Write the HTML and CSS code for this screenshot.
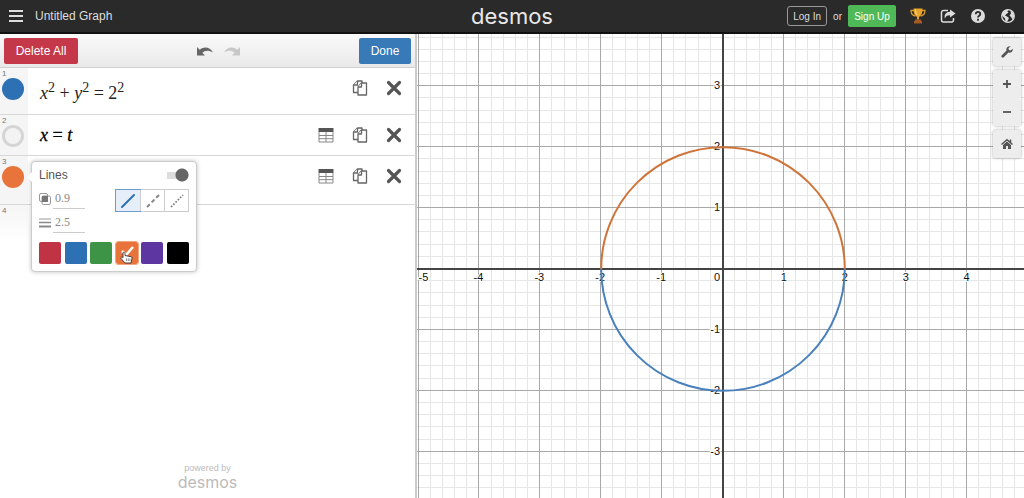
FILE: index.html
```html
<!DOCTYPE html>
<html lang="en">
<head>
<meta charset="utf-8">
<title>Untitled Graph</title>
<link rel="stylesheet" href="styles.css">
</head>
<body>
<svg class="defs" aria-hidden="true">
  <symbol id="i-copy" viewBox="0 0 16 16"><g fill="#fff" stroke="#666" stroke-width="1.300" stroke-linejoin="round"><path d="M5.500 1h4.500v11.500H1.500V5z"/><path d="M1.500 5h4V1"/><path d="M9.500 3h5v12H6V7z"/><path d="M6 7h3.500V3"/></g></symbol>
  <symbol id="i-x" viewBox="0 0 16 16"><path d="M2.500 2.500l11 11M13.500 2.500l-11 11" stroke="#555" stroke-width="3.200" stroke-linecap="round"/></symbol>
  <symbol id="i-table" viewBox="0 0 16 16"><path d="M.5 1h15v4H.5z" fill="#555"/><path d="M1 5v10h14V5M1 8.500h14M1 11.700h14M8 5v10" fill="none" stroke="#888"/></symbol>
  <symbol id="i-undo" viewBox="0 0 16 10"><path d="M0 1v8.500h8L5.300 6.800C8 4 12 4 16 6.500 13 .8 7 0 2.700 3.800z"/></symbol>
</svg>

<header class="header">
  <div class="header-left">
    <button class="icon-btn" aria-label="Menu"><svg width="14" height="12" viewBox="0 0 14 12"><path d="M0 1h14M0 6h14M0 11h14" stroke="#ddd" stroke-width="2"/></svg></button>
    <span class="title">Untitled Graph</span>
  </div>
  <a class="logo" href="#">desmos</a>
  <div class="header-right">
    <button class="login">Log In</button>
    <span class="or">or</span>
    <button class="signup">Sign Up</button>
    <nav class="header-icons">
      <button class="icon-btn" aria-label="Challenges"><svg width="16" height="16" viewBox="0 0 16 16"><path d="M4 2.500H1c0 3 1.500 5 4.500 5.500M12 2.500h3c0 3-1.500 5-4.500 5.500" fill="none" stroke="#d99a2b" stroke-width="1.300"/><path d="M3.500.5h9c0 4-.8 7-3.500 8.500v2.500H7V9C4.300 7.500 3.500 4.500 3.500.5z" fill="#e9a52c"/><path d="M5.500 1.500c0 3 .5 4.500 1.500 5.500" stroke="#ffe08a" fill="none"/><path d="M5 11.500h6V13h1v2.500H4V13h1z" fill="#a45a25"/></svg></button>
      <button class="icon-btn" aria-label="Share"><svg width="16" height="16" viewBox="0 0 16 16"><path d="M8 2.500H3.500a2 2 0 0 0-2 2v7.500a2 2 0 0 0 2 2h8a2 2 0 0 0 2-2V10" fill="none" stroke="#ddd" stroke-width="1.500"/><path d="M10 1.500l5.500 4-5.500 4V7.300C7 7.200 5.600 8.300 5 10.800 3.800 6.500 6 4 10 3.800z" fill="#ddd"/></svg></button>
      <button class="icon-btn" aria-label="Help"><svg width="16" height="16" viewBox="0 0 16 16"><circle cx="8" cy="8" r="7" fill="#ddd"/><path d="M5.700 6.300c0-3.300 4.800-3 4.600-.2C10.200 7.800 8 7.800 8 9.500M8 10.800v1.900" fill="none" stroke="#2a2a2a" stroke-width="1.800"/></svg></button>
      <button class="icon-btn" aria-label="Language"><svg width="16" height="16" viewBox="0 0 16 16"><circle cx="8" cy="8" r="6.300" fill="none" stroke="#ddd" stroke-width="1.300"/><path d="M2 5l3-3 3.500-.3L7.300 3.500l1.200 1L6.500 6 5 7.500l2.500 1.200L9 10l-2 4-1.500-.5L5 10.500 2 7.500zM10.500 2.500l3 2.500.7 3.500-1.700 3-1.500-2.500-1.500-1.500L11 5.500z" fill="#ddd"/></svg></button>
    </nav>
  </div>
</header>

<main class="main">
  <section class="panel" aria-label="Expressions">
    <div class="toolbar">
      <button class="btn btn-red">Delete All</button>
      <div class="history">
        <button class="icon-btn" aria-label="Undo"><svg width="16" height="10" fill="#666"><use href="#i-undo"/></svg></button>
        <button class="icon-btn flip" aria-label="Redo"><svg width="16" height="10" fill="#c8c8c8"><use href="#i-undo"/></svg></button>
      </div>
      <button class="btn btn-blue">Done</button>
    </div>

    <ol class="list">
      <li class="row row-tall">
        <div class="gutter"><span class="num">1</span><button class="dot dot-blue" aria-label="Style of expression 1"></button></div>
        <div class="math"><span><i>x</i><sup>2</sup> + <i>y</i><sup>2</sup> = 2<sup>2</sup></span></div>
        <div class="actions">
          <button class="icon-btn" aria-label="Duplicate"><svg width="16" height="16"><use href="#i-copy"/></svg></button>
          <button class="icon-btn" aria-label="Delete"><svg width="16" height="16"><use href="#i-x"/></svg></button>
        </div>
      </li>
      <li class="row">
        <div class="gutter"><span class="num">2</span><button class="dot dot-empty" aria-label="Style of expression 2"></button></div>
        <div class="math math-dark"><span><i>x</i> = <i>t</i></span></div>
        <div class="actions">
          <button class="icon-btn" aria-label="Convert to table"><svg width="16" height="16"><use href="#i-table"/></svg></button>
          <button class="icon-btn" aria-label="Duplicate"><svg width="16" height="16"><use href="#i-copy"/></svg></button>
          <button class="icon-btn" aria-label="Delete"><svg width="16" height="16"><use href="#i-x"/></svg></button>
        </div>
      </li>
      <li class="row row-open">
        <div class="gutter"><span class="num">3</span><button class="dot dot-orange" aria-label="Style of expression 3"></button></div>
        <div class="math"></div>
        <div class="actions">
          <button class="icon-btn" aria-label="Convert to table"><svg width="16" height="16"><use href="#i-table"/></svg></button>
          <button class="icon-btn" aria-label="Duplicate"><svg width="16" height="16"><use href="#i-copy"/></svg></button>
          <button class="icon-btn" aria-label="Delete"><svg width="16" height="16"><use href="#i-x"/></svg></button>
        </div>
        <div class="popup">
          <div class="popup-head"><label for="lines">Lines</label><input class="toggle" type="checkbox" id="lines" checked></div>
          <div class="popup-mid">
            <div class="fields">
              <label class="field"><svg width="12" height="12" viewBox="0 0 12 12" aria-label="Opacity"><rect x=".5" y=".5" width="8" height="8" rx="1.500" fill="none" stroke="#999"/><rect x="3" y="3" width="8.500" height="8.500" rx="1.500" fill="none" stroke="#999"/><path d="M3 3h6v6H3z" fill="#777"/></svg><input type="text" value="0.9"></label>
              <label class="field"><svg width="12" height="10" viewBox="0 0 12 10" aria-label="Thickness"><path d="M0 1h12" stroke="#999"/><path d="M0 4.500h12" stroke="#888" stroke-width="1.500"/><path d="M0 8.500h12" stroke="#888" stroke-width="2"/></svg><input type="text" value="2.5"></label>
            </div>
            <div class="styles">
              <button class="style-on" aria-label="Solid"><svg width="16" height="16" viewBox="0 0 16 16"><path d="M2 14L14 2" stroke="#2d70b3" stroke-width="2" stroke-linecap="round"/></svg></button>
              <button aria-label="Dashed"><svg width="16" height="16" viewBox="0 0 16 16"><path d="M2 14L14 2" stroke="#888" stroke-width="2" stroke-dasharray="4 2.500"/></svg></button>
              <button aria-label="Dotted"><svg width="16" height="16" viewBox="0 0 16 16"><path d="M2 14L14 2" stroke="#777" stroke-width="1.700" stroke-dasharray="1.700 1.500"/></svg></button>
            </div>
          </div>
          <div class="colors">
            <button class="c-red" aria-label="Red"></button>
            <button class="c-blue" aria-label="Blue"></button>
            <button class="c-green" aria-label="Green"></button>
            <button class="c-orange" aria-label="Orange"><svg width="18" height="20" viewBox="0 0 18 20"><path d="M4 7l4 4 7-8" fill="none" stroke="#fff" stroke-width="2.500"/><path d="M5 8.500c1-.8 2 0 2 1v2l6 1.200c1 .3 1.200 1 1 2L13 19H7l-4-4.500c-.7-1.200.8-2 2-.8z" fill="#fff" stroke="#333" stroke-width=".9"/><path d="M8.500 14.500v2.500M10.300 14.500v2.500M12 14.500v2.500" stroke="#555" stroke-width=".7"/></svg></button>
            <button class="c-purple" aria-label="Purple"></button>
            <button class="c-black" aria-label="Black"></button>
          </div>
        </div>
      </li>
      <li class="row row-last"><div class="gutter"><span class="num">4</span></div></li>
    </ol>
    <footer class="powered"><span>powered by</span><strong>desmos</strong></footer>
  </section>

  <section class="graph" aria-label="Graph">
    <svg class="plot" viewBox="-306 -235 607 464" preserveAspectRatio="xMidYMid slice">
      <g id="grid"></g>
      <g id="labels"></g>
      <path d="M-121.800 0A121.800 121.800 0 0 0 121.800 0" class="curve curve-blue"/>
      <path d="M-121.800 0A121.800 121.800 0 0 1 121.800 0" class="curve curve-orange"/>
    </svg>
    <div class="tools">
      <button class="tool" aria-label="Graph settings"><svg width="12" height="12" viewBox="0 0 12 12"><path d="M1.800 10.200L7 5" stroke="#555" stroke-width="2.800" stroke-linecap="round"/><path d="M11.800 2.800L9.500 4.500 7.800 4l-.3-1.700L9.600.3C7 0 5 1.700 5.300 4L8 6.800c2.200.2 4-1.500 3.800-4z" fill="#555"/></svg></button>
      <div class="zoom">
        <button class="tool" aria-label="Zoom in"><svg width="10" height="10" viewBox="0 0 10 10"><path d="M5 1v8M1 5h8" stroke="#555" stroke-width="1.800"/></svg></button>
        <button class="tool" aria-label="Zoom out"><svg width="10" height="10" viewBox="0 0 10 10"><path d="M1 5h8" stroke="#555" stroke-width="1.800"/></svg></button>
      </div>
      <button class="tool" aria-label="Default view"><svg width="12" height="12" viewBox="0 0 12 12"><path d="M.5 6.500L6 1.800l5.500 4.700M9.500 1.500v3" fill="none" stroke="#555" stroke-width="1.500"/><path d="M2 7l4-3.500L10 7v4H7V8H5v3H2z" fill="#555"/></svg></button>
    </div>
  </section>
</main>
<script src="graph.js"></script>
</body>
</html>
```
FILE: styles.css
```css
* { box-sizing: border-box; }
body { margin: 0; height: 100vh; display: flex; flex-direction: column; font-family: "Liberation Sans", Arial, sans-serif; font-size: 12px; color: #555; background: #fff; overflow: hidden; }
button { font: inherit; border: 0; padding: 0; background: none; cursor: pointer; }
svg { display: block; flex: none; }
.defs { position: absolute; width: 0; height: 0; }
.icon-btn { display: flex; align-items: center; justify-content: center; }

.header { flex: none; height: 34px; display: grid; grid-template-columns: 1fr auto 1fr; align-items: center; background: #2a2a2a; border-bottom: 2px solid #111; color: #ddd; }
.header-left { display: flex; align-items: center; gap: 12px; padding-left: 9px; }
.title { font-size: 12px; }
.logo { color: #e8e8e8; text-decoration: none; font-family: Inter, sans-serif; font-size: 22px; line-height: 30px; }
.header-right { display: flex; align-items: center; justify-content: flex-end; font-size: 10px; padding-right: 8px; }
.login { height: 20px; width: 40px; border: 1px solid #999; border-radius: 3px; color: #ddd; white-space: nowrap; }
.or { padding: 0 6px; }
.signup { height: 22px; width: 48px; border-radius: 2px; background: #4fb857; color: #fff; }
.header-icons { display: flex; gap: 14px; padding-left: 14px; }

.main { flex: 1; min-height: 0; display: flex; }
.panel { flex: none; width: 417px; display: flex; flex-direction: column; border-right: 2px solid #ccc; }
.toolbar { flex: none; height: 34px; display: flex; align-items: center; justify-content: space-between; padding: 0 4px; background: linear-gradient(#fafafa, #e9e9e9); border-bottom: 1px solid #d0d0d0; }
.btn { height: 26px; border-radius: 2px; color: #fff; font-size: 12px; }
.btn-red { width: 74px; background: #c4384a; }
.btn-blue { width: 52px; background: #3879b8; }
.history { display: flex; gap: 11px; }
.flip { transform: scaleX(-1); }

.list { list-style: none; margin: 0; padding: 0; flex: 1; }
.row { position: relative; display: flex; height: 41px; border-bottom: 1px solid #d8d8d8; }
.row-tall { height: 47px; }
.row-open { height: 49px; }
.row-last { height: 36px; border: 0; }
.gutter { width: 28px; background: #f5f5f5; padding: 1px 2px; display: flex; flex-direction: column; }
.row-last .gutter { background: linear-gradient(#f5f5f5, #fff); }
.num { font-size: 8px; line-height: 9px; color: #777; }
.dot { width: 22px; height: 22px; border-radius: 50%; }
.dot-blue { background: #2d70b3; }
.dot-orange { background: #e8743b; }
.dot-empty { background: #f3f3f3; border: 3px solid #d5d5d5; }
.math { flex: 1; display: flex; align-items: center; padding: 3px 0 0 12px; font-family: "Liberation Serif", serif; font-size: 18px; line-height: 24px; color: #222; }
.math-dark { color: #000; padding-top: 0; -webkit-text-stroke: 0.3px #000; }
.math span { white-space: nowrap; }
.math sup { font-size: 14px; line-height: 0; vertical-align: 7px; }
.actions { display: flex; height: 40px; padding-right: 4px; }
.actions .icon-btn { width: 34px; }

.popup { position: absolute; left: 31px; top: 5px; z-index: 2; width: 166px; padding: 6px 7px 7px; background: #fff; border: 1px solid #ccc; border-radius: 4px; box-shadow: 0 0 4px rgba(0, 0, 0, .25); }
.popup::before { content: ""; position: absolute; left: -5px; top: 10px; border: 5px solid transparent; border-left: 0; border-right-color: #fff; }
.popup-head { display: flex; justify-content: space-between; align-items: center; height: 14px; font-size: 12px; }
.toggle { appearance: none; margin: 0; width: 22px; height: 14px; background: radial-gradient(circle at 15px 7px, #666 6px, transparent 7px), linear-gradient(#ddd, #ddd) 0 4px / 20px 7px no-repeat; border-radius: 3px; }
.popup-mid { display: flex; justify-content: space-between; align-items: flex-start; padding-top: 7px; }
.fields { display: grid; gap: 4px; }
.field { display: flex; align-items: center; gap: 2px; height: 20px; }
.field input { width: 32px; height: 19px; padding: 0 2px; border: 0; border-bottom: 1px solid #ccc; background: none; font: 12px/16px "Liberation Serif", serif; color: #888; }
.styles { display: flex; border: 1px solid #ccc; }
.styles button { width: 24px; height: 21px; display: flex; align-items: center; justify-content: center; border-left: 1px solid #ccc; }
.styles .style-on { border: 0; outline: 1px solid #6d9bca; background: #e6eff9; }
.colors { display: flex; justify-content: space-between; padding-top: 9px; }
.colors button { width: 22px; height: 22px; border-radius: 2px; display: flex; align-items: flex-end; justify-content: center; }
.c-red { background: #bf3344; }
.c-blue { background: #2d70b3; }
.c-green { background: #3d9447; }
.colors .c-orange { background: #e8743b; outline: 1px solid #f2a57e; }
.c-purple { background: #5d36a1; }
.c-black { background: #000; }

.powered { display: flex; flex-direction: column; align-items: center; padding-bottom: 8px; color: #bbb; font-size: 9px; line-height: 10px; }
.powered strong { font: 16px/20px Inter, sans-serif; height: 18px; margin-top: -1px; }

.graph { flex: 1; position: relative; min-width: 0; }
.plot { width: 100%; height: 100%; }
.minor { stroke: #e6e6e6; }
.major { stroke: #a8a8a8; }
.axis { stroke: #444; stroke-width: 2; }
.label { font-size: 11px; fill: #111; stroke: #fff; stroke-width: 2; paint-order: stroke; }
.curve { fill: none; stroke-width: 2; }
.curve-blue { stroke: #4a80bb; }
.curve-orange { stroke: #cf7439; }
.tools { position: absolute; top: 4px; right: 3px; width: 28px; display: grid; gap: 4px; }
.tool { width: 28px; height: 28px; display: flex; align-items: center; justify-content: center; background: #ededed; border-radius: 3px; box-shadow: 0 0 3px rgba(0, 0, 0, .35); }
.zoom { border-radius: 3px; box-shadow: 0 0 3px rgba(0, 0, 0, .35); }
.zoom .tool { box-shadow: none; }
```
FILE: graph.js
```js
const NS = "http://www.w3.org/2000/svg";
const UNIT = 60.9;
const grid = document.getElementById("grid");
const labels = document.getElementById("labels");

function line(x1, y1, x2, y2, cls) {
  const el = document.createElementNS(NS, "line");
  el.setAttribute("x1", x1);
  el.setAttribute("y1", y1);
  el.setAttribute("x2", x2);
  el.setAttribute("y2", y2);
  el.setAttribute("class", cls);
  grid.append(el);
}

function label(x, y, anchor, text) {
  const el = document.createElementNS(NS, "text");
  el.setAttribute("x", x);
  el.setAttribute("y", y);
  el.setAttribute("text-anchor", anchor);
  el.setAttribute("class", "label");
  el.textContent = text;
  labels.append(el);
}

for (const cls of ["minor", "major"]) {
  for (let i = -30; i <= 30; i++) {
    if ((i % 5 === 0) !== (cls === "major")) continue;
    const p = Math.round(i * UNIT / 5) - 0.5;
    line(p, -400, p, 400, cls);
    line(-400, p, 400, p, cls);
  }
}
line(0, -400, 0, 400, "axis");
line(-400, 0, 400, 0, "axis");

label(-3, 12, "end", "0");
for (let n = -5; n <= 4; n++) {
  if (n === 0) continue;
  const x = n === -5 ? n * UNIT + 5 : n * UNIT - (n < 0 ? 1 : 0);
  label(x, 12, "middle", n);
  if (Math.abs(n) <= 3) label(-3, -n * UNIT + 3, "end", n);
}
```
